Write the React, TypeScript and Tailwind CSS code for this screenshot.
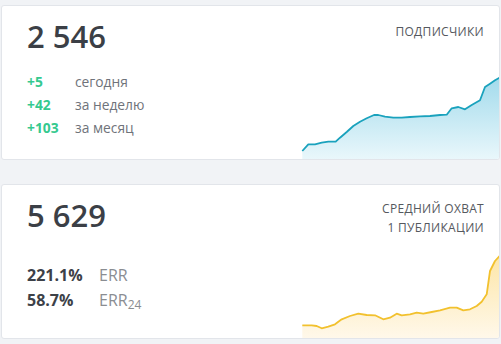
import React from 'react'

type Pt = [number, number]

// chart points in page coords, shifted into the svg box below
const subsPoints: Pt[] = [
  [302.3, 150], [308.3, 143.3], [315, 143.3], [321.7, 141.7], [328.3, 140.7], [335.7, 140.7],
  [340, 136.7], [346.7, 131], [353.3, 125], [360, 120.7], [366.7, 117.3], [374, 114],
  [378.3, 114], [385, 115.7], [393.3, 116.7], [401.7, 116.7], [410, 116], [420, 115.3],
  [430, 115], [440, 114], [446.7, 113.7], [451.7, 107.3], [458.3, 106], [465, 108.3],
  [471.7, 104], [480, 99.3], [485, 86], [490, 82.7], [495, 79.3], [499.5, 76.7],
]

const reachPoints: Pt[] = [
  [302.3, 324.3], [311.7, 324.3], [316.7, 325], [321.7, 327.3], [328.3, 325.7], [335, 323.3],
  [341.7, 318.3], [350, 315], [358.3, 312.7], [366.7, 314], [375, 314.3], [383.3, 318.3],
  [390, 316.7], [396.7, 312.7], [401.7, 314.3], [410, 313.3], [416.7, 311.7], [423.3, 312.7],
  [431.7, 311], [440, 309.3], [450, 306.7], [456.7, 306.7], [463.3, 309.3], [470, 308.3],
  [476.7, 305], [481.7, 300.7], [486.7, 293.3], [490, 270], [495, 260], [499.5, 255],
]

function Sparkline({ points, x0, y0, stroke, top, bottom, id }: {
  points: Pt[]
  x0: number
  y0: number
  stroke: string
  top: string
  bottom: string
  id: string
}) {
  const w = 198
  const h = 90
  const pts = points.map(([x, y]) => [x - x0, y - y0] as Pt)
  const line = pts.map(([x, y], i) => `${i ? 'L' : 'M'}${x.toFixed(1)} ${y.toFixed(1)}`).join(' ')
  const area = `${line} L${pts[pts.length - 1][0]} ${h} L${pts[0][0]} ${h} Z`
  return (
    <svg width={w} height={h} viewBox={`0 0 ${w} ${h}`} className="block">
      <defs>
        <linearGradient id={id} x1="0" y1="0" x2="0" y2="1">
          <stop offset="0" stopColor={top} />
          <stop offset="1" stopColor={bottom} />
        </linearGradient>
      </defs>
      <path d={area} fill={`url(#${id})`} />
      <path d={line} fill="none" stroke={stroke} strokeWidth={1.8} strokeLinejoin="round" />
    </svg>
  )
}

export default function App() {
  return (
    <div
      className="w-[501px] h-[344px] bg-[#f1f3f6] pt-[5px] px-[1px] flex flex-col gap-[24px]"
      style={{ fontFamily: '"Open Sans", "Noto Sans", sans-serif' }}
    >
      {/* subscribers */}
      <div className="flex h-[155px] bg-white border border-[#e2e5ea] rounded-[3px] overflow-hidden">
        <div className="flex-1 pl-[25px] pt-[15px]">
          <div className="text-[31px] leading-[31px] font-semibold text-[#3b3f46]">2 546</div>
          <div className="mt-[18px] text-[13.8px] leading-[23px]">
            <div className="flex">
              <span className="w-[48px] font-bold text-[#35c98f]">+5</span>
              <span className="text-[#6f737a]">сегодня</span>
            </div>
            <div className="flex">
              <span className="w-[48px] font-bold text-[#35c98f]">+42</span>
              <span className="text-[#6f737a]">за неделю</span>
            </div>
            <div className="flex">
              <span className="w-[48px] font-bold text-[#35c98f]">+103</span>
              <span className="text-[#6f737a]">за месяц</span>
            </div>
          </div>
        </div>
        <div className="flex flex-col items-end justify-between">
          <div className="pt-[16px] pr-[15px] text-[12px] leading-[19px] tracking-[0.3px] text-[#55585e] text-right">ПОДПИСЧИКИ</div>
          <Sparkline points={subsPoints} x0={301} y0={68} stroke="#1aa2bd" top="#a3dbec" bottom="#e9f7fb" id="g1" />
        </div>
      </div>

      {/* reach */}
      <div className="flex h-[155px] bg-white border border-[#e2e5ea] rounded-[3px] overflow-hidden">
        <div className="flex-1 pl-[25px] pt-[15px]">
          <div className="text-[31px] leading-[31px] font-semibold text-[#3b3f46]">5 629</div>
          <div className="mt-[32px] text-[16px] leading-[25px]">
            <div className="flex">
              <span className="w-[72px] font-bold text-[#3d4148]">221.1%</span>
              <span className="text-[#8a8d92]">ERR</span>
            </div>
            <div className="flex">
              <span className="w-[72px] font-bold text-[#3d4148]">58.7%</span>
              <span className="text-[#8a8d92]">
                ERR<sub className="text-[12px]">24</sub>
              </span>
            </div>
          </div>
        </div>
        <div className="flex flex-col items-end justify-between">
          <div className="pt-[14px] pr-[15px] text-[12px] leading-[19px] tracking-[0.3px] text-[#55585e] text-right">
            СРЕДНИЙ ОХВАТ
            <br />
            1 ПУБЛИКАЦИИ
          </div>
          <Sparkline points={reachPoints} x0={301} y0={247} stroke="#f2c12e" top="#fde6a8" bottom="#fff8ea" id="g2" />
        </div>
      </div>
    </div>
  )
}
